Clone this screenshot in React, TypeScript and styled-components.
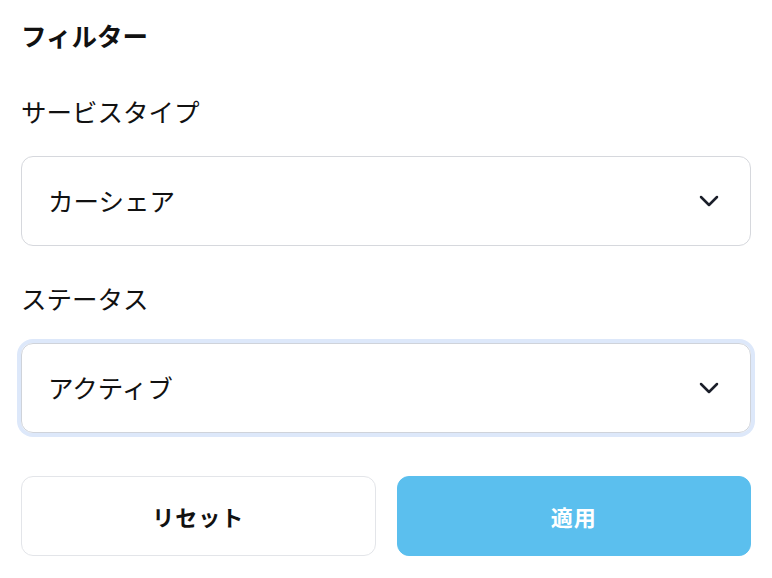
import React from "react";
import styled, { createGlobalStyle } from "styled-components";

const Global = createGlobalStyle`
  html, body { margin: 0; padding: 0; background: #ffffff; }
  body { font-family: "Noto Sans CJK JP", "Noto Sans", sans-serif; color: #111111; }
`;

const Panel = styled.div`
  padding: 17px 21px 0 21px;
  display: flex;
  flex-direction: column;
`;

const Title = styled.h2`
  margin: 0;
  font-size: 25.5px;
  line-height: 36px;
  font-weight: 700;
`;

const Field = styled.div<{ $top: number }>`
  display: flex;
  flex-direction: column;
  margin-top: ${(p) => p.$top}px;
`;

const Label = styled.label`
  font-size: 25.5px;
  line-height: 38px;
  font-weight: 400;
`;

const Select = styled.div<{ $focused?: boolean }>`
  margin-top: 26px;
  height: 90px;
  box-sizing: border-box;
  border: 1px solid ${(p) => (p.$focused ? "#cfd3da" : "#d6d8dd")};
  border-radius: 12px;
  padding: 0 31px 3px 26px;
  display: flex;
  align-items: center;
  justify-content: space-between;
  font-size: 25.5px;
  box-shadow: ${(p) => (p.$focused ? "0 0 0 4px #dde8fa" : "none")};
`;

const Chevron = styled.svg`
  margin-top: 2px;
`;

const ChevronIcon = () => (
  <Chevron width="20" height="12" viewBox="0 0 20 12" fill="none" stroke="#1b1f2a" strokeWidth="2.5" strokeLinecap="round" strokeLinejoin="round">
    <path d="M2 2l8 8 8-8" />
  </Chevron>
);

const Actions = styled.div`
  margin-top: 43px;
  display: grid;
  grid-template-columns: 1fr 1fr;
  gap: 21px;
`;

const Button = styled.button<{ $primary?: boolean }>`
  height: 80px;
  border-radius: 12px;
  font-family: inherit;
  font-size: 22px;
  font-weight: 700;
  border: 1px solid ${(p) => (p.$primary ? "#5bbfee" : "#e3e5e9")};
  background: ${(p) => (p.$primary ? "#5bbfee" : "#ffffff")};
  color: ${(p) => (p.$primary ? "#ffffff" : "#111111")};
  letter-spacing: 1px;
  padding-bottom: 2px;
`;

export default function App() {
  return (
    <>
      <Global />
      <Panel>
        <Title>フィルター</Title>
        <Field $top={39}>
          <Label>サービスタイプ</Label>
          <Select>
            <span>カーシェア</span>
            <ChevronIcon />
          </Select>
        </Field>
        <Field $top={33}>
          <Label>ステータス</Label>
          <Select $focused>
            <span>アクティブ</span>
            <ChevronIcon />
          </Select>
        </Field>
        <Actions>
          <Button>リセット</Button>
          <Button $primary>適用</Button>
        </Actions>
      </Panel>
    </>
  );
}
